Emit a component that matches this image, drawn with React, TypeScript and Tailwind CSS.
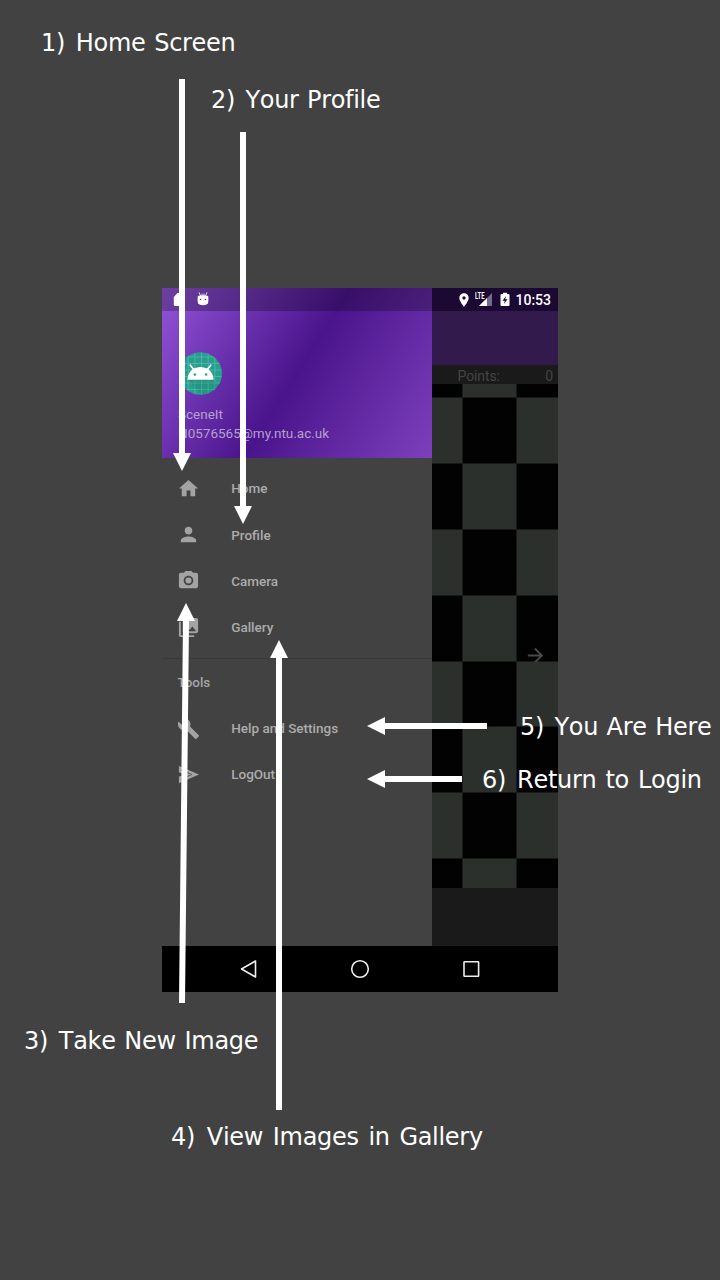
import type { ReactNode } from "react";
import { MdHome, MdPerson, MdCameraAlt, MdPhotoLibrary, MdBuild, MdLocationOn, MdArrowForward } from "react-icons/md";

const RIGHT_ROWS = ["h-[14px]", "h-[66px]", "h-[66px]", "h-[66px]", "h-[66px]", "h-[65px]", "h-[66px]", "h-[66px]", "h-[29px]"];

function SendIcon() {
  return (
    <svg width="1em" height="1em" viewBox="0 0 24 24" fill="currentColor" fillRule="evenodd">
      <path d="M2 3L23 12L2 21V14L11 12L2 10ZM4.500 6.200L16 12L4.500 17.800V15.600L15 12L4.500 8.400Z" />
    </svg>
  );
}

function MenuRow({ icon, label }: { icon: ReactNode; label: string }) {
  return (
    <div className="flex h-[46.2px] items-center pl-[15.3px]">
      <span className="w-[53.9px] text-[23px] text-[#a3a3a3]">{icon}</span>
      <span className="text-[13.5px] font-medium whitespace-nowrap text-[#acacac]">{label}</span>
    </div>
  );
}

function Avatar() {
  return (
    <svg className="ml-[.5px] h-[43px] w-[43px]" viewBox="0 0 42 43" preserveAspectRatio="none">
      <defs>
        <clipPath id="disc"><ellipse cx="21" cy="21.5" rx="21" ry="21.3" /></clipPath>
      </defs>
      <g clipPath="url(#disc)">
        <rect width="42" height="43" fill="#26a08c" />
        <path d="M2.500 0V43M9 0V43M15.500 0V43M22 0V43M28.500 0V43M35 0V43M0 5H42M0 11.500H42M0 18H42M0 24.500H42M0 31H42M0 37.500H42" stroke="#63c0b1" strokeWidth=".6" />
        <path d="M21 28H34L42 36V43H22L9 28Z" fill="#16705f" opacity=".2" />
      </g>
      <path d="M8.200 27.800C8.500 22.500 11 18.500 14.500 16.500Q21 13.500 27.500 16.500C31 18.500 33.500 22.500 33.800 27.800Z" fill="#fff" />
      <path d="M11 13.200L14 17M31 13.200L28 17" stroke="#fff" strokeWidth="1.700" strokeLinecap="round" />
      <circle cx="15.500" cy="22.500" r="1.200" fill="#26a08c" />
      <circle cx="26.500" cy="22.500" r="1.200" fill="#26a08c" />
    </svg>
  );
}

function StatusBar() {
  return (
    <div className="absolute inset-x-0 top-0 flex h-[23px]">
      <div className="flex w-[270px] items-center bg-black/25 pl-[11px]">
        <svg className="h-[15px] w-[12px]" viewBox="0 0 12 15"><path d="M4.500 1H11V14H2Q.8 14 .8 12.800V5Z" fill="#fff" /></svg>
        <svg className="ml-[11.5px] h-[15px] w-[12px]" viewBox="0 0 12 15">
          <path d="M.8 4Q6 2.400 11.200 4Q11.800 8 11 11.500Q9.500 13.200 6 13.200T1 11.500Q.2 8 .8 4Z" fill="#fff" />
          <path d="M2 .3L3.500 4M10 .3L8.500 4M5 1.500V4M7 1.500V4" stroke="#fff" strokeWidth=".8" />
          <circle cx="3.500" cy="7.500" r=".8" fill="#572d83" /><circle cx="8.500" cy="7.500" r=".8" fill="#572d83" />
        </svg>
      </div>
      <div className="flex grow items-center bg-[#1b0833] pl-[24px] text-white">
        <MdLocationOn className="h-[16px] w-[16px]" />
        <svg className="ml-[3px] h-[15px] w-[18px]" viewBox="0 0 18 15">
          <path d="M17 1V14H4Z" fill="#75698a" /><path d="M12 6V14H4Z" fill="#fff" />
          <rect width="10.500" height="7.500" fill="#1b0833" />
          <text x="0" y="7" fill="#fff" fontFamily="Roboto" fontWeight="700" fontSize="9" textLength="9.500" lengthAdjust="spacingAndGlyphs">LTE</text>
        </svg>
        <svg className="ml-[6.5px] h-[15px] w-[10px]" viewBox="0 0 10 15"><path d="M3 .8H7V2H8.500Q9.500 2 9.500 3V13Q9.500 14 8.500 14H1.500Q.5 14 .5 13V3Q.5 2 1.500 2H3Z" fill="#fff" /><path d="M6 4L2.500 8.800H4.800L4 12L7.500 7.200H5.200Z" fill="#1b0833" /></svg>
        <span className="ml-[6px] text-[14px] leading-none font-medium">10:53</span>
      </div>
    </div>
  );
}

function Drawer() {
  return (
    <div className="flex w-[269.5px] shrink-0 flex-col bg-[#424242]">
      <div className="flex h-[169.5px] flex-col bg-[linear-gradient(122.2deg,#9355d9_0%,#4a148c_50%,#7d40bd_100%)] pt-[64px] pl-[16px]">
        <Avatar />
        <span className="mt-[10px] text-[13.5px] leading-[19px] text-[#b4a1ca]">SceneIt</span>
        <span className="text-[13.5px] leading-[19px] text-[#b4a1ca]">N0576565@my.ntu.ac.uk</span>
      </div>
      <div className="flex flex-col pt-[7.900px]">
        <MenuRow icon={<MdHome />} label="Home" />
        <MenuRow icon={<MdPerson />} label="Profile" />
        <MenuRow icon={<MdCameraAlt />} label="Camera" />
        <MenuRow icon={<MdPhotoLibrary />} label="Gallery" />
      </div>
      <div className="mt-[7.500px] h-px bg-[#393939]" />
      <div className="flex h-[46.600px] items-center pt-[1.500px] pl-[15.500px] text-[13.400px] font-medium text-[#a6a6a6]">Tools</div>
      <MenuRow icon={<MdBuild />} label="Help and Settings" />
      <MenuRow icon={<SendIcon />} label="LogOut" />
    </div>
  );
}

function Board() {
  return (
    <div className="flex grow flex-col bg-[#1a1a1a] pt-[23px]">
      <div className="h-[54px] bg-[#321a4d]" />
      <div className="flex h-[19px] items-center justify-between pt-[3px] pr-[5px] pl-[26px] text-[14px] leading-none tracking-[-0.1px] text-[#444]">
        <span>Points:</span><span>0</span>
      </div>
      {RIGHT_ROWS.map((height, i) => {
        const side = i % 2 === 0 ? "bg-[#020202]" : "bg-[#2b302c]";
        const middle = i % 2 === 0 ? "bg-[#2b302c]" : "bg-[#020202]";
        return (
          <div key={i} className={`grid grid-cols-[30.5px_53px_1fr] gap-px ${height} ${i < 8 ? "border-b border-[#181a18]" : ""}`}>
            <div className={side} />
            <div className={middle} />
            <div className={`${side} flex items-end justify-center`}>
              {i === 4 && <MdArrowForward className="mr-[4px] mb-[-6px] h-[23px] w-[23px] text-[#484848]" />}
            </div>
          </div>
        );
      })}
    </div>
  );
}

function NavigationBar() {
  return (
    <div className="flex h-[46px] items-center justify-around bg-black px-[31px]">
      <svg className="h-[22px] w-[22px]" viewBox="0 0 22 22" fill="none" stroke="#eee" strokeWidth="1.600" strokeLinejoin="round"><path d="M3.500 11L17.500 3V19Z" /></svg>
      <svg className="h-[22px] w-[22px]" viewBox="0 0 22 22" fill="none" stroke="#eee" strokeWidth="1.600"><circle cx="11" cy="11" r="8.300" /></svg>
      <svg className="h-[22px] w-[22px]" viewBox="0 0 22 22" fill="none" stroke="#eee" strokeWidth="1.600"><rect x="4" y="3.700" width="14.600" height="14.600" rx=".5" /></svg>
    </div>
  );
}

function Label({ number, place, children }: { number: number; place: string; children: string }) {
  return (
    <div className={`absolute font-['DejaVu_Sans',sans-serif] text-[24px] leading-[28px] tracking-[-0.3px] whitespace-pre text-white [font-kerning:none] ${place}`}>
      <span className="mr-[2px]">{number})</span> {children}
    </div>
  );
}

export default function App() {
  return (
    <div className="relative flex h-[1280px] w-[720px] justify-center overflow-hidden bg-[#424242] pt-[288px]">
      <div className="relative flex h-[704px] w-[396px] flex-col font-[Roboto,sans-serif]">
        <div className="flex h-[658px]">
          <Drawer />
          <Board />
        </div>
        <NavigationBar />
        <StatusBar />
      </div>
      <svg className="absolute inset-0 h-[1280px] w-[720px]" viewBox="0 0 720 1280" fill="#fff">
        <path d="M179 79H185V453H191L182 471L173 453H179Z" />
        <path d="M240 132H246V506H252L243 524L234 506H240Z" />
        <path d="M179 1003L183 621H177L186 603L195 621H189L185 1003Z" />
        <path d="M276 1110V658H270L279 640L288 658H282V1110Z" />
        <path d="M487 723V729H385V735L367 726L385 717V723Z" />
        <path d="M462 776V782H385V788L367 779L385 770V776Z" />
      </svg>
      <Label number={1} place="top-[29px] left-[41px] [word-spacing:1.400px]">Home Screen</Label>
      <Label number={2} place="top-[86px] left-[211px] [word-spacing:1px]">Your Profile</Label>
      <Label number={3} place="top-[1027px] left-[24px] [word-spacing:1.400px]">Take New Image</Label>
      <Label number={4} place="top-[1123px] left-[171px] [word-spacing:2.400px]">View Images in Gallery</Label>
      <Label number={5} place="top-[713px] left-[520px] [word-spacing:1.100px]">You Are Here</Label>
      <Label number={6} place="top-[766px] left-[482px] [word-spacing:1.700px]">Return to Login</Label>
    </div>
  );
}
